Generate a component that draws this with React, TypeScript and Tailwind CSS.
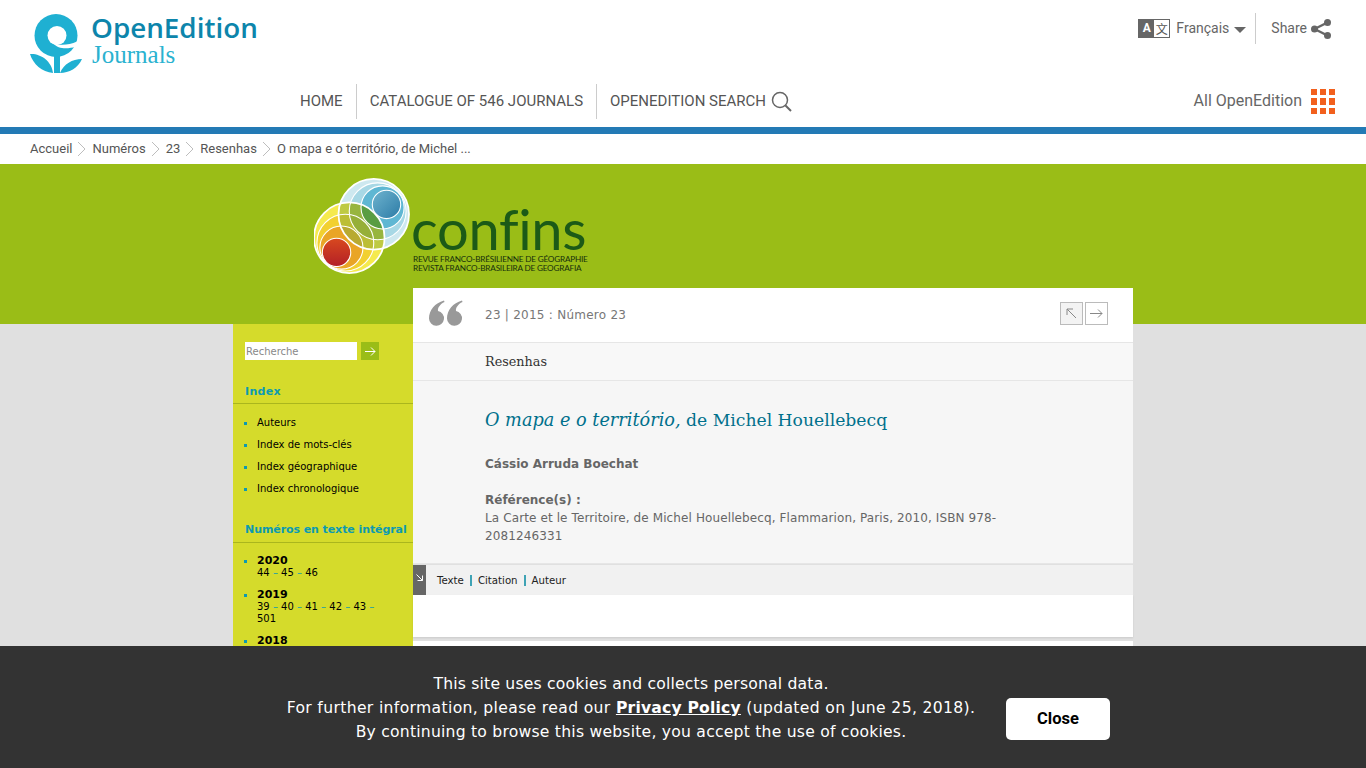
import React from 'react';

const roboto = { fontFamily: 'Roboto, sans-serif' };

const Chevron = () => (
  <svg width="10" height="16" viewBox="0 0 10 16" fill="none" stroke="#bdbdbd" strokeWidth="1" className="mx-[5px]">
    <path d="M1 1l7 7-7 7" />
  </svg>
);

const OpenEditionLogo = () => (
  <svg width="56" height="60" viewBox="0 0 56 60" className="mt-[2px]">
    <circle cx="26" cy="21.500" r="21.500" fill="#1fb0d2" />
    <circle cx="27" cy="21.500" r="9.500" fill="#fff" />
    <path fill="#fff" d="M23 29c7 3 16 2 24-1.500l1 2.500c-1 1-1.500 2-2.500 3-7 1.500-17 3-22.500-4z" />
    <path fill="#1fb0d2" d="M24 41h6v18h-6z" />
    <path fill="#1fb0d2" d="M0 40c10-1 22 7 23 19C12 58 3 50 0 40zM52 45c-4 9-13 14-22 14 4-9 12-14 22-14z" />
  </svg>
);

const ringsA = [
  { cx: 35, cy: 58, r: 36, fill: '#f5ea4e' },
  { cx: 31, cy: 63, r: 29, fill: '#f2d030' },
  { cx: 27, cy: 68, r: 22, fill: '#e9a526' },
];
const ringsB = [
  { cx: 60, cy: 34, r: 36, fill: '#cde8ef' },
  { cx: 64, cy: 31, r: 29, fill: '#a7d8e5' },
  { cx: 69, cy: 27, r: 22, fill: '#5fb7d3' },
];

const ConfinsLogo = () => (
  <div className="flex items-start w-[274px] h-[98px]">
    <svg width="96" height="96" viewBox="-1 -3 98 98" className="shrink-0">
      <defs>
        <clipPath id="outerA"><circle cx="35" cy="58" r="36" /></clipPath>
        <linearGradient id="red" x1="0" y1="0" x2="0" y2="1"><stop offset="0" stopColor="#d8491f" /><stop offset="1" stopColor="#b31f26" /></linearGradient>
        <linearGradient id="blue" x1="0" y1="0" x2="1" y2="1"><stop offset="0" stopColor="#6fb4cf" /><stop offset="1" stopColor="#2c7ba6" /></linearGradient>
      </defs>
      {ringsB.map((c, i) => <circle key={i} {...c} />)}
      {ringsA.map((c, i) => <circle key={i} {...c} />)}
      <g clipPath="url(#outerA)">
        <circle cx="60" cy="34" r="36" fill="#8fae3a" fillOpacity="0.55" />
        <circle cx="64" cy="31" r="29" fill="#6f9f3c" fillOpacity="0.5" />
        <circle cx="69" cy="27" r="22" fill="#3f9345" fillOpacity="0.7" />
      </g>
      <g fill="none" stroke="#fff">
        {ringsB.map((c, i) => <circle key={i} cx={c.cx} cy={c.cy} r={c.r} strokeWidth={i === 0 ? 1.8 : 1.1} />)}
        {ringsA.map((c, i) => <circle key={i} cx={c.cx} cy={c.cy} r={c.r} strokeWidth={i === 0 ? 1.8 : 1.1} />)}
      </g>
      <circle cx="22" cy="73" r="14.500" fill="url(#red)" stroke="#fff" strokeWidth="1.100" />
      <circle cx="73" cy="24" r="14.500" fill="url(#blue)" stroke="#fff" strokeWidth="1.100" />
    </svg>
    <div className="ml-[1px] mt-[29px] flex flex-col">
      <span className="text-[56px] leading-[44px] tracking-[-0.3px] [font-variant-ligatures:none] text-[#1c5a17]" style={{ fontFamily: 'Lato, sans-serif', fontWeight: 400 }}>confins</span>
      <span className="text-[8.200px] leading-[9px] mt-[4px] ml-[2px] tracking-[-0.2px] text-[#16300c] whitespace-nowrap" style={{ fontFamily: 'Lato, sans-serif' }}>REVUE FRANCO-BRÉSILIENNE DE GÉOGRAPHIE</span>
      <span className="text-[8.200px] leading-[9px] ml-[2px] tracking-[-0.2px] text-[#16300c] whitespace-nowrap" style={{ fontFamily: 'Lato, sans-serif' }}>REVISTA FRANCO-BRASILEIRA DE GEOGRAFIA</span>
    </div>
  </div>
);

const SideTitle = ({ children, className }: { children: React.ReactNode; className: string }) => (
  <div className={`pl-3 font-bold text-[11px] leading-[14px] whitespace-nowrap text-[#0d9ab1] border-b border-[#aab61d] ${className}`}>{children}</div>
);

const Bullet = ({ children }: { children: React.ReactNode }) => (
  <li className="relative pl-6 pr-1">
    <span className="absolute left-[11px] top-[5px] w-[3px] h-[3px] bg-[#0d9ab1]" />
    {children}
  </li>
);

const Dash = () => <span className="text-[#0d9ab1]"> – </span>;

const QuoteMark = () => (
  <svg width="34" height="27" viewBox="0 0 34 27" fill="#999" className="absolute left-[16px] top-[12px]">
    <path d="M15 .5C6 3 0 10 0 18.500A7.500 7.500 0 1 0 9 11C8.500 8 11 4 15.500 2z" />
    <path d="M33 .5C24 3 18 10 18 18.500A7.500 7.500 0 1 0 27 11C26.500 8 29 4 33.500 2z" />
  </svg>
);

export default function App() {
  return (
    <div className="relative h-screen overflow-hidden bg-[#e0e0e0]" style={{ fontFamily: '"DejaVu Sans", sans-serif' }}>
      <header className="bg-white h-[127px] flex flex-col relative" style={roboto}>
        <div className="flex justify-between h-[84px]">
          <div className="flex items-start pl-[30px] pt-[12px]">
            <OpenEditionLogo />
            <div className="ml-[5px] flex flex-col">
              <span className="text-[27.800px] leading-[31px] font-semibold text-[#0d85ab]" style={{ fontFamily: '"Open Sans", sans-serif' }}>OpenEdition</span>
              <span className="text-[25px] leading-[24px] ml-px text-[#2ab2d0]" style={{ fontFamily: '"Liberation Serif", serif' }}>Journals</span>
            </div>
          </div>
          <div className="flex items-start pt-[13px] pr-[35px] text-[14px] text-[#666]">
            <div className="flex items-center h-[31px]">
              <div className="flex items-center w-[32px] h-[19px] border border-[#666] mr-[6px]">
                <span className="w-[15px] h-full bg-[#666] text-white text-[12px] font-bold text-center leading-[17px]">A</span>
                <span className="flex-1 text-[12px] text-center leading-[17px] text-[#555]" style={{ fontFamily: '"Noto Sans CJK SC", sans-serif' }}>文</span>
              </div>
              <span>Français</span>
              <svg width="12" height="6" viewBox="0 0 12 6" className="ml-[5px] mt-[2px]"><path d="M0 0h12L6 6z" fill="#666" /></svg>
            </div>
            <div className="w-px h-[31px] bg-[#ccc] ml-[9px] mr-[15px]" />
            <div className="flex items-center h-[31px]">
              <span>Share</span>
              <svg width="20" height="20" viewBox="0 0 20 20" className="ml-[4px]" fill="#666">
                <circle cx="16.500" cy="3.500" r="3.500" /><circle cx="3.500" cy="10" r="3.500" /><circle cx="16.500" cy="16.500" r="3.500" />
                <path d="M3.500 10L16.500 3.500M3.500 10l13 6.500" stroke="#666" strokeWidth="2.500" />
              </svg>
            </div>
          </div>
        </div>
        <div className="flex justify-between items-center h-[35px] pl-[300px] pr-[31px] text-[15px] text-[#555]">
          <nav className="flex items-center h-full">
            <span>HOME</span>
            <span className="w-px h-full bg-[#ccc] mx-[13px]" />
            <span>CATALOGUE OF 546 JOURNALS</span>
            <span className="w-px h-full bg-[#ccc] mx-[13px]" />
            <span>OPENEDITION SEARCH</span>
            <svg width="21" height="21" viewBox="0 0 21 21" fill="none" stroke="#666" strokeWidth="1.500" className="ml-[5px]">
              <circle cx="9" cy="9" r="7.500" /><path d="M14.500 14.500L20 20" strokeWidth="2" />
            </svg>
          </nav>
          <div className="flex items-center text-[16px] text-[#666]">
            <span className="-mt-[2px]">All OpenEdition</span>
            <div className="grid grid-cols-3 gap-[3px] ml-[9px]">
              {Array.from({ length: 9 }).map((_, i) => (
                <span key={i} className="w-[6px] h-[6.500px] bg-[#f2601d]" />
              ))}
            </div>
          </div>
        </div>
      </header>
      <div className="h-[7px] bg-[#237ab5]" />
      <div className="bg-white h-[30px] pl-[30px] flex items-center text-[13px] text-[#555]" style={roboto}>
        <span>Accueil</span><Chevron />
        <span>Numéros</span><Chevron />
        <span>23</span><Chevron />
        <span>Resenhas</span><Chevron />
        <span>O mapa e o território, de Michel ...</span>
      </div>
      <div className="h-[160px] bg-[#9abd17] pl-[314px] pt-[14px]">
        <ConfinsLogo />
      </div>
      <div className="w-[900px] ml-[233px] flex items-start">
        <aside className="w-[180px] h-[340px] bg-[#d5db2b] shrink-0 text-[10px] leading-[12px] text-black">
          <div className="flex pl-3 pt-[18px]">
            <div className="w-[112px] h-[18px] bg-white text-[#888] text-[10px] leading-[19px] pl-[1px]">Recherche</div>
            <div className="w-[18px] h-[18px] ml-[4px] bg-[#9abd17] flex items-center justify-center">
              <svg width="11" height="9" viewBox="0 0 11 9" fill="none" stroke="#fff" strokeWidth="1"><path d="M0 4.500h10M6 .5l4 4-4 4" /></svg>
            </div>
          </div>
          <SideTitle className="mt-[25px] pb-[4px] tracking-[0.3px]">Index</SideTitle>
          <ul className="mt-[13px] flex flex-col gap-[10px]">
            <Bullet>Auteurs</Bullet>
            <Bullet>Index de mots-clés</Bullet>
            <Bullet>Index géographique</Bullet>
            <Bullet>Index chronologique</Bullet>
          </ul>
          <SideTitle className="mt-[28px] pb-[5px] tracking-[-0.08px]">Numéros en texte intégral</SideTitle>
          <ul className="mt-[12px] flex flex-col gap-[10px]">
            <Bullet><b className="text-[11px]">2020</b><br />44<Dash />45<Dash />46</Bullet>
            <Bullet><b className="text-[11px]">2019</b><br />39<Dash />40<Dash />41<Dash />42<Dash />43<Dash /><br />501</Bullet>
            <Bullet><b className="text-[11px]">2018</b></Bullet>
          </ul>
        </aside>
        <main className="w-[720px] -mt-9 shrink-0">
          <div className="bg-white h-[55px] border-b border-[#e6e6e6] flex items-center pr-[25px] relative">
            <QuoteMark />
            <span className="ml-[72px] text-[12px] text-[#777] tracking-[0.25px]">23 | 2015 : Número 23</span>
            <div className="ml-auto flex gap-[2px] -mt-[3px]">
              <div className="w-[23px] h-[23px] border border-[#bbb] bg-[#f3f3f3] flex items-center justify-center">
                <svg width="11" height="11" viewBox="0 0 11 11" fill="none" stroke="#888"><path d="M1 1h6M1 1v6M1 1l9 9" /></svg>
              </div>
              <div className="w-[23px] h-[23px] border border-[#bbb] bg-white flex items-center justify-center">
                <svg width="13" height="9" viewBox="0 0 13 9" fill="none" stroke="#888"><path d="M0 4.500h12M8 .5l4 4-4 4" /></svg>
              </div>
            </div>
          </div>
          <div className="bg-[#f8f8f8] h-[38px] border-b border-[#e6e6e6] pl-[72px] flex items-center text-[#333]" style={{ fontFamily: '"DejaVu Serif", serif' }}>
            <span className="text-[12.800px]">Resenhas</span>
          </div>
          <div className="bg-[#f6f6f6] h-[183px] pl-[72px] pr-[130px] pt-[27px] border-b border-[#e6e6e6] text-[12px] text-[#666]">
            <h1 className="text-[17.200px] leading-[24px] text-[#00708c]" style={{ fontFamily: '"DejaVu Serif", serif' }}>
              <i className="text-[17.700px]">O mapa e o território,</i> de Michel Houellebecq
            </h1>
            <p className="mt-[23px] font-bold leading-[18px] text-[#666]">Cássio Arruda Boechat</p>
            <p className="mt-[18px] font-bold leading-[18px]">Référence(s) :</p>
            <p className="leading-[18px] tracking-[0.11px]">La Carte et le Territoire, de Michel Houellebecq, Flammarion, Paris, 2010, ISBN 978-2081246331</p>
          </div>
          <div className="mt-px h-[30px] bg-[#f1f1f1] flex items-center text-[10.200px] text-[#222]">
            <div className="w-[13px] h-full bg-[#666] flex justify-center pt-[9px]">
              <svg width="7" height="7" viewBox="0 0 7 7" fill="none" stroke="#fff"><path d="M.5.5l6 6M6.500 1.500v5h-5" /></svg>
            </div>
            <span className="ml-[11px] mt-[2px]">Texte</span>
            <span className="w-[2px] h-[11px] bg-[#3fa3b5] mx-[6px]" />
            <span className="mt-[2px]">Citation</span>
            <span className="w-[2px] h-[11px] bg-[#3fa3b5] mx-[6px]" />
            <span className="mt-[2px]">Auteur</span>
          </div>
          <div className="bg-white h-[42px] shadow-[0_1px_2px_rgba(0,0,0,0.1)]" />
          <div className="bg-white h-[100px] mt-[4px]" />
        </main>
      </div>
      <div className="absolute left-0 right-0 bottom-0 h-[122px] bg-[#333] flex items-center text-white text-[15.600px] leading-[24px]">
        <div className="w-[1000px] ml-[131px] text-center pt-[2px] tracking-[0.23px]">
          <span className="tracking-[0.2px]">This site uses cookies and collects personal data.</span><br />
          <span className="tracking-[0.35px]">For further information, please read our <b className="underline tracking-[0.2px]">Privacy Policy</b> (updated on June 25, 2018).</span><br />
          By continuing to browse this website, you accept the use of cookies.
        </div>
        <button className="absolute left-[1006px] top-[52px] w-[104px] h-[42px] bg-white rounded-[5px] text-black font-bold text-[16.500px]" style={roboto}>Close</button>
      </div>
    </div>
  );
}
